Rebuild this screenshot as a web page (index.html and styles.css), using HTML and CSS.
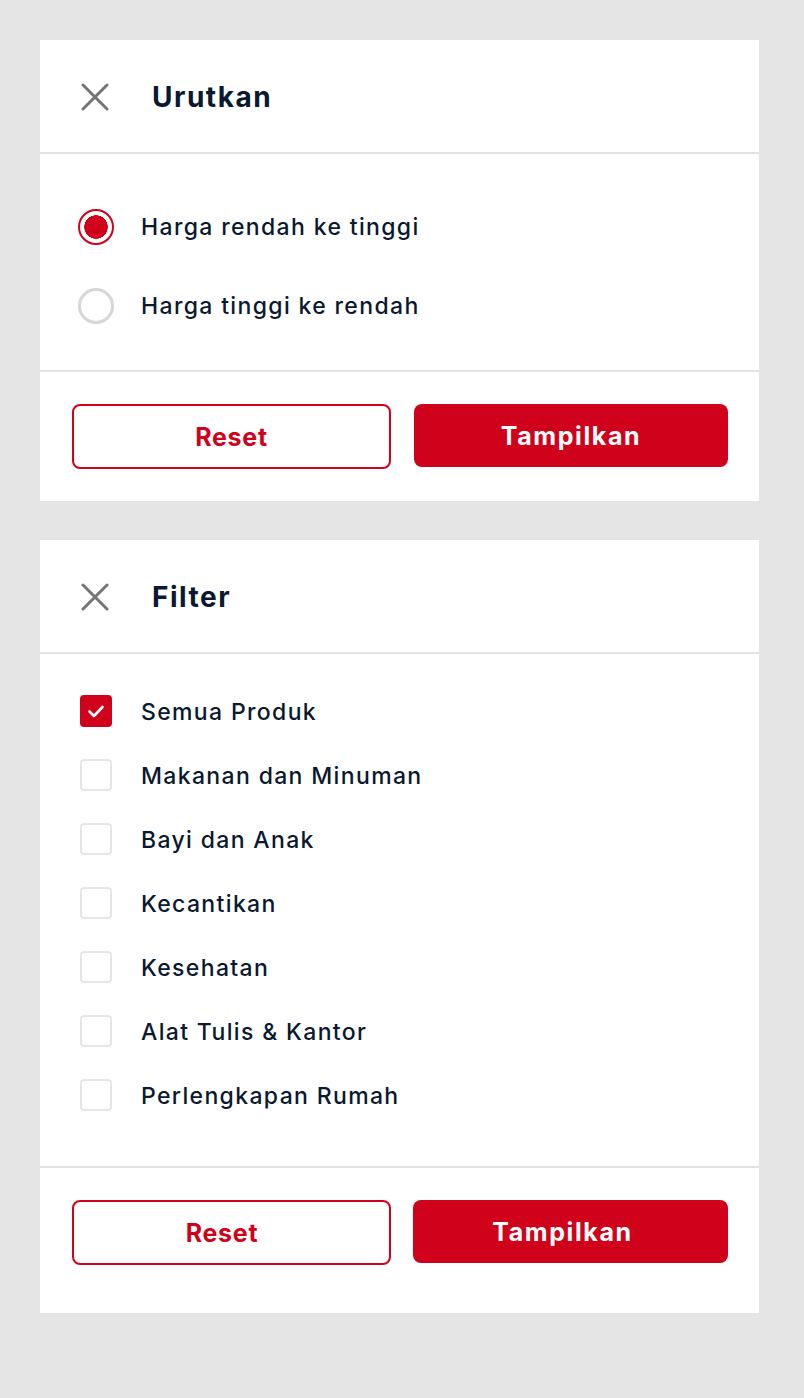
FILE: index.html
```html
<!DOCTYPE html>
<html lang="id">
<head>
<meta charset="utf-8">
<title>Urutkan &amp; Filter</title>
<link rel="stylesheet" href="styles.css">
</head>
<body>
<main class="page">
  <section class="card">
    <header class="card-head">
      <span class="close" aria-label="Tutup">
        <svg viewBox="0 0 28 28" width="28" height="28"><path d="M2 2 L26 26 M26 2 L2 26" stroke="#757575" stroke-width="3" stroke-linecap="round" fill="none"/></svg>
      </span>
      <h2 class="title">Urutkan</h2>
    </header>
    <div class="card-body sort-body">
      <label class="option radio-row">
        <span class="radio checked"></span>
        <span class="label">Harga rendah ke tinggi</span>
      </label>
      <label class="option radio-row">
        <span class="radio"></span>
        <span class="label">Harga tinggi ke rendah</span>
      </label>
    </div>
    <footer class="card-foot foot-sort">
      <button class="btn btn-outline">Reset</button>
      <button class="btn btn-fill">Tampilkan</button>
    </footer>
  </section>

  <section class="card">
    <header class="card-head">
      <span class="close" aria-label="Tutup">
        <svg viewBox="0 0 28 28" width="28" height="28"><path d="M2 2 L26 26 M26 2 L2 26" stroke="#757575" stroke-width="3" stroke-linecap="round" fill="none"/></svg>
      </span>
      <h2 class="title">Filter</h2>
    </header>
    <div class="card-body filter-body">
      <label class="option check-row">
        <span class="check checked"><svg viewBox="0 0 32 32" width="32" height="32"><path d="M9.5 16.5 L14 21 L22.5 12" stroke="#fff" stroke-width="2.6" stroke-linecap="round" stroke-linejoin="round" fill="none"/></svg></span>
        <span class="label">Semua Produk</span>
      </label>
      <label class="option check-row"><span class="check"></span><span class="label">Makanan dan Minuman</span></label>
      <label class="option check-row"><span class="check"></span><span class="label">Bayi dan Anak</span></label>
      <label class="option check-row"><span class="check"></span><span class="label">Kecantikan</span></label>
      <label class="option check-row"><span class="check"></span><span class="label">Kesehatan</span></label>
      <label class="option check-row"><span class="check"></span><span class="label">Alat Tulis &amp; Kantor</span></label>
      <label class="option check-row"><span class="check"></span><span class="label">Perlengkapan Rumah</span></label>
    </div>
    <footer class="card-foot foot-filter">
      <button class="btn btn-outline">Reset</button>
      <button class="btn btn-fill">Tampilkan</button>
    </footer>
  </section>
</main>
</body>
</html>
```

FILE: styles.css
```css
* { box-sizing: border-box; }

html, body {
  margin: 0;
  padding: 0;
}

body {
  background: #e5e5e5;
  font-family: Inter, "Noto Sans", sans-serif;
  color: #0a1830;
  width: 804px;
  min-height: 1398px;
}

.page {
  padding: 40px 45px 40px 40px;
  display: flex;
  flex-direction: column;
  gap: 39px;
}

.card {
  background: #fff;
  width: 719px;
}

.card-head {
  height: 114px;
  border-bottom: 2px solid #e2e2e2;
  display: flex;
  align-items: center;
  padding-left: 81px;
}

.close {
  display: flex;
  width: 28px;
  height: 28px;
  margin-left: -40px;
  margin-right: 43px;
  margin-top: 2px;
}

.title {
  margin: 0;
  font-size: 28px;
  font-weight: 700;
  letter-spacing: 1.5px;
  color: #0a1830;
  padding-top: 2px;
}

.card-body {
  border-bottom: 2px solid #e2e2e2;
  display: flex;
  flex-direction: column;
}

.sort-body {
  padding: 33px 0 25px 38px;
}

.filter-body {
  padding: 25px 0 39px 40px;
}

.option {
  display: flex;
  align-items: center;
}

.radio-row {
  height: 79px;
}

.check-row {
  height: 64px;
}

.label {
  font-size: 23px;
  font-weight: 500;
  letter-spacing: 1.35px;
  color: #0a1830;
  padding-top: 1px;
}

.radio {
  width: 36px;
  height: 36px;
  border-radius: 50%;
  border: 3px solid #d7d7d7;
  margin-right: 27px;
  flex: none;
}

.radio.checked {
  border: 2px solid #d0021b;
  background: radial-gradient(circle, #d0021b 0 11.5px, #fff 12px);
}

.check {
  width: 32px;
  height: 32px;
  border: 2px solid #e6e6e6;
  border-radius: 4px;
  margin-right: 29px;
  flex: none;
  display: flex;
}

.check.checked {
  background: #d0021b;
  border: none;
}

.card-foot {
  display: flex;
  align-items: flex-start;
  padding: 32px 31px 32px 32px;
  gap: 23px;
}

.foot-filter {
  padding-bottom: 48px;
  gap: 22px;
}

.btn {
  font-family: Inter, "Noto Sans", sans-serif;
  font-size: 25px;
  font-weight: 700;
  border-radius: 8px;
  cursor: pointer;
  padding: 0;
}

.btn-outline {
  width: 319px;
  height: 65px;
  border: 2px solid #d0021b;
  background: #fff;
  color: #d0021b;
  letter-spacing: 0.7px;
}

.btn-fill {
  flex: 1;
  height: 63px;
  border: none;
  background: #d0021b;
  color: #fff;
  letter-spacing: 1.6px;
}

.foot-filter .btn-outline {
  padding-right: 19px;
}

.foot-filter .btn-fill {
  padding-right: 16px;
}
```
